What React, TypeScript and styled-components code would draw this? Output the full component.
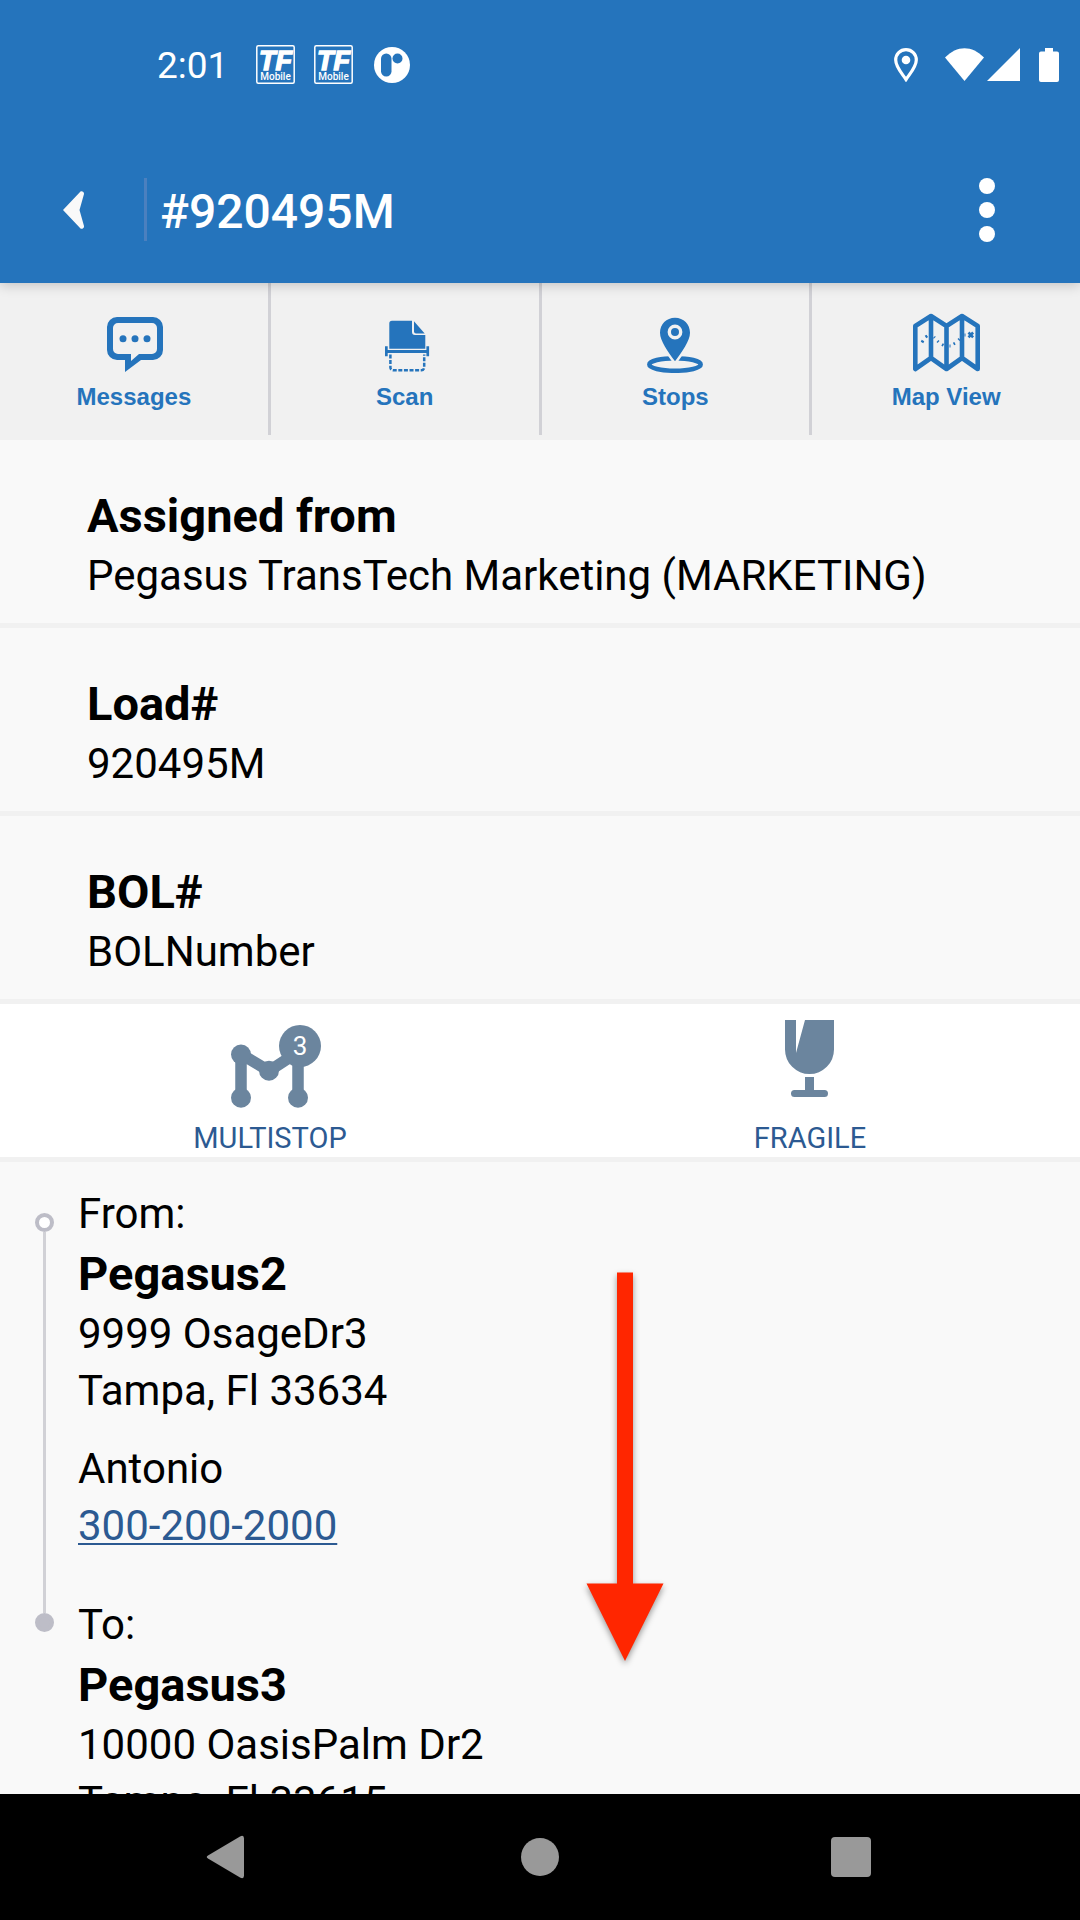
import React from "react";
import styled, { createGlobalStyle } from "styled-components";

const blue = "#2574bc";
const slate = "#6b859e";
const link = "#2c5a92";
const rule = "#f1f1f1";
const railLine = "#d1d1d6";
const railDot = "#bdbdc7";

const GlobalStyle = createGlobalStyle`
  *, *::before, *::after { box-sizing: border-box; }
  body { margin: 0; background: #000; }
  button { border: 0; padding: 0; background: none; font: inherit; color: inherit; cursor: pointer; }
  svg { display: block; flex: none; }
  h1, h2, h3, p, dl, dt, dd { margin: 0; font: inherit; }
`;

const Screen = styled.div`
  display: flex;
  flex-direction: column;
  height: 100vh;
  background: #f9f9f9;
  color: #000;
  font-family: Roboto, "Noto Sans", sans-serif;
  font-size: 42px;
  line-height: 57px;
`;

const Header = styled.header`
  position: relative;
  z-index: 1;
  flex: none;
  background: ${blue};
  color: #fff;
  box-shadow: 0 2px 12px rgba(0, 0, 0, 0.2);
`;

const StatusBar = styled.div`
  display: flex;
  align-items: center;
  justify-content: space-between;
  height: 129px;
  padding: 0 21px 0 157px;
`;

const StatusGroup = styled.div`
  display: flex;
  align-items: center;
  gap: 19px;
`;

const Clock = styled.time`
  font-size: 37px;
  line-height: 44px;
  padding: 2px 9px 0 0;
`;

const AppBar = styled.div`
  display: flex;
  align-items: center;
  height: 154px;
  padding-top: 7px;
`;

const BackButton = styled.button`
  display: flex;
  align-items: center;
  width: 144px;
  height: 96px;
  padding-left: 62px;
`;

const Title = styled.h1`
  flex: 1;
  border-left: 3px solid #4b80bf;
  padding: 4px 0 0 13px;
  font-size: 48px;
  line-height: 59px;
  font-weight: 500;
`;

const MenuButton = styled.button`
  display: flex;
  align-items: center;
  justify-content: center;
  width: 96px;
  height: 96px;
  margin-right: 45px;
`;

const Toolbar = styled.nav`
  flex: none;
  padding-bottom: 5px;
  background: ${rule};
`;

const Tools = styled.div`
  display: grid;
  grid-template-columns: repeat(4, 1fr);
  gap: 3px;
  background: ${railLine};
`;

const Tool = styled.button`
  display: flex;
  flex-direction: column;
  align-items: center;
  gap: 10px;
  padding: 30px 0 24px;
  background: ${rule};
  color: ${blue};
  font: bold 24px/28px "Liberation Sans", Arial, sans-serif;
`;

const Content = styled.main`
  flex: 1;
  min-height: 0;
  overflow-y: auto;
  scrollbar-width: none;
`;

const Field = styled.div`
  padding: 45px 87px 19px;
  border-bottom: 5px solid ${rule};
`;

const FieldName = styled.dt`
  font-size: 47px;
  line-height: 62px;
  font-weight: 700;
`;

const FieldValue = styled.dd``;

const Flags = styled.div`
  display: grid;
  grid-template-columns: repeat(2, 1fr);
  background: #fff;
  border-bottom: 5px solid ${rule};
`;

const Flag = styled.div`
  display: flex;
  flex-direction: column;
  align-items: center;
  gap: 13px;
  padding: 16px 0 2px;
  color: ${link};
  font-size: 29px;
  line-height: 34px;
`;

const Route = styled.section`
  position: relative;
  padding: 23px 35px 42px;
`;

const Stop = styled.div`
  display: flex;
  gap: 24px;
`;

const Rail = styled.div`
  display: flex;
  flex-direction: column;
  align-items: center;
  width: 19px;
  flex: none;
`;

const RailGap = styled.div`
  height: 28px;
`;

const RailLine = styled.div<{ $length?: number }>`
  width: 3px;
  background: ${railLine};
  ${(p) => (p.$length ? `height: ${p.$length}px;` : "flex: 1;")}
`;

const RailMarker = styled.div<{ $filled?: boolean }>`
  width: 19px;
  height: 19px;
  border-radius: 50%;
  border: 4px solid ${railDot};
  background: ${(p) => (p.$filled ? railDot : "#fff")};
`;

const StopBody = styled.div`
  padding-bottom: 42px;
`;

const StopName = styled.h2`
  font-size: 47px;
  line-height: 63px;
  font-weight: 700;
`;

const Contact = styled.div`
  padding-top: 21px;
`;

const Phone = styled.a`
  color: ${link};
  text-decoration: underline;
  text-decoration-thickness: 2px;
  text-underline-offset: 3px;
`;

const Arrow = styled.svg`
  position: absolute;
  top: 105px;
  left: 580px;
  pointer-events: none;
  filter: drop-shadow(0 3px 3px rgba(0, 0, 0, 0.4));
`;

const SystemNav = styled.nav`
  flex: none;
  display: grid;
  grid-template-columns: repeat(3, 1fr);
  height: 126px;
  padding: 0 70px;
  background: #000;
`;

const SystemButton = styled.button`
  display: flex;
  align-items: center;
  justify-content: center;
`;

function TFIcon() {
  return (
    <svg width="39" height="39" viewBox="0 0 39 39" role="img" aria-label="TF Mobile">
      <rect x=".8" y=".8" width="37.4" height="37.4" rx="1.5" fill="none" stroke="#fff" strokeWidth="1.5" />
      <text x="19.5" y="25" fill="#fff" textAnchor="middle" fontFamily="Liberation Sans, Arial, sans-serif" fontWeight="700" fontStyle="italic" fontSize="27" stroke="#fff" strokeWidth="1.4">TF</text>
      <text x="19.5" y="35" fill="#fff" textAnchor="middle" fontFamily="Roboto, sans-serif" fontWeight="500" fontSize="10">Mobile</text>
    </svg>
  );
}

function RoundLogo() {
  return (
    <svg width="38" height="36" viewBox="-2 0 38 36">
      <circle cx="18" cy="18" r="18" fill="#fff" />
      <rect x="7" y="6.500" width="10.500" height="23" rx="5.200" fill={blue} />
      <circle cx="23.500" cy="11.500" r="5" fill={blue} />
    </svg>
  );
}

function MessagesIcon() {
  return (
    <svg width="70" height="60" viewBox="0 0 70 60" fill={blue}>
      <path fillRule="evenodd" d="M18 4H54a10 10 0 0 1 10 10V37a10 10 0 0 1-10 10H42L26 59V47H18a10 10 0 0 1-10-10V14A10 10 0 0 1 18 4zM19 10a5 5 0 0 0-5 5V36a5 5 0 0 0 5 5H32V48L40 41H53a5 5 0 0 0 5-5V15a5 5 0 0 0-5-5z" />
      <circle cx="24" cy="25.700" r="3.500" />
      <circle cx="36" cy="25.700" r="3.500" />
      <circle cx="48" cy="25.700" r="3.500" />
    </svg>
  );
}

function ScanIcon() {
  return (
    <svg width="70" height="60" viewBox="0 0 70 60" fill={blue}>
      <path d="M22 7.700H42V19a3 3 0 0 0 3 3H55.300V35.700H19.300V10.500A2.800 2.800 0 0 1 22 7.700z" />
      <path d="M44 8.200L54.700 20.400H46a2 2 0 0 1-2-2z" />
      <path d="M15 33.300h2.700v3.700H56.400v-3.700h2.700v10h-2.700V40H17.700v3.300H15z" />
      <path d="M20.400 41.500V54.500a2.800 2.800 0 0 0 2.800 2.800H51.400a2.800 2.800 0 0 0 2.800-2.800V41.500" fill="none" stroke={blue} strokeWidth="2.500" strokeDasharray="4 1.600" />
    </svg>
  );
}

function StopsIcon() {
  return (
    <svg width="70" height="60" viewBox="0 0 70 60">
      <ellipse cx="35" cy="51.500" rx="25.700" ry="6.300" fill="none" stroke={blue} strokeWidth="4.500" />
      <path d="M35 4.700c-8.600 0-15 6.600-15 15 0 8 8 19 15 28.500 7-9.500 15-20.500 15-28.500 0-8.400-6.400-15-15-15z" fill={blue} stroke={rule} strokeWidth="5" paintOrder="stroke" />
      <circle cx="35" cy="19" r="5.700" fill={blue} stroke={rule} strokeWidth="3.400" />
    </svg>
  );
}

function MapIcon() {
  return (
    <svg width="70" height="60" viewBox="0 0 70 60" fill="none" stroke={blue} strokeWidth="4.600" strokeLinejoin="round">
      <path d="M4.300 13L20 3l15.500 10L51 3l15.700 10v43L51 45 35.500 56 20 45 4.300 56zM20 3v42M35.500 13v43M51 3v42" />
      <path d="M11 29.500l1-2M14.500 24l1.800-1.200M23 24l.8.800M26.500 28l1 1M31 31.500l1.500.8M38.500 33h1M42.500 31l1.500-.8M47.500 27l1-1M53.500 22h1" strokeWidth="2.800" />
      <path d="M57.500 19.500l4.600 4.800M62.100 19.500l-4.600 4.800" strokeWidth="2.600" />
    </svg>
  );
}

function MultistopIcon({ count }: { count: number }) {
  return (
    <svg width="102" height="88" viewBox="0 0 102 88" fill={slate}>
      <path d="M22 78V34L50 51 79 32M79 26V78" fill="none" stroke={slate} strokeWidth="11.500" strokeLinejoin="round" />
      <circle cx="22" cy="34.500" r="10" />
      <circle cx="50" cy="50.700" r="10" />
      <circle cx="22" cy="77.700" r="10" />
      <circle cx="79" cy="77.700" r="10" />
      <circle cx="81" cy="26" r="21" />
      <text x="81" y="35" fill="#fff" textAnchor="middle" fontFamily="Roboto, sans-serif" fontSize="26">{count}</text>
    </svg>
  );
}

function FragileIcon() {
  return (
    <svg width="102" height="88" viewBox="0 0 102 88" fill={slate}>
      <path d="M26 0H37V33L46 0H75V29.500a24.500 24.500 0 0 1-49 0z" />
      <path d="M46 57h9V70H65.500a3.500 3.500 0 0 1 0 7h-30a3.500 3.500 0 0 1 0-7H46z" />
    </svg>
  );
}

const tools = [
  { label: "Messages", Icon: MessagesIcon },
  { label: "Scan", Icon: ScanIcon },
  { label: "Stops", Icon: StopsIcon },
  { label: "Map View", Icon: MapIcon },
];

const fields = [
  { name: "Assigned from", value: "Pegasus TransTech Marketing (MARKETING)" },
  { name: "Load#", value: "920495M" },
  { name: "BOL#", value: "BOLNumber" },
];

export default function App() {
  return (
    <Screen>
      <GlobalStyle />
      <Header>
        <StatusBar>
          <StatusGroup>
            <Clock>2:01</Clock>
            <TFIcon />
            <TFIcon />
            <RoundLogo />
          </StatusGroup>
          <StatusGroup>
            <svg width="32" height="34" viewBox="0 0 32 34">
              <path d="M12 1.700C6.200 1.700 1.700 6.200 1.700 12c0 7 6.300 13.500 10.300 19.500C16 25.500 22.300 19 22.300 12 22.300 6.200 17.800 1.700 12 1.700z" fill="none" stroke="#fff" strokeWidth="3.200" />
              <circle cx="12" cy="12" r="4.300" fill="#fff" />
            </svg>
            <svg width="75" height="34" viewBox="0 0 75 34" fill="#fff">
              <path d="M0 9.500C12-3 27-3 39 9.500L19.500 33z" />
              <path d="M75 0V33H42z" />
            </svg>
            <svg width="20" height="34" viewBox="0 0 20 34" fill="#fff">
              <path d="M6 0h8v3.500h4a2 2 0 0 1 2 2V32a2 2 0 0 1-2 2H2a2 2 0 0 1-2-2V5.500a2 2 0 0 1 2-2h4z" />
            </svg>
          </StatusGroup>
        </StatusBar>
        <AppBar>
          <BackButton aria-label="Back">
            <svg width="24" height="40" viewBox="0 0 24 40">
              <path d="M18.500 1.500c1-1 4 .3 3.500 2.500L17.500 20 22 36c.5 2.200-2.500 3.500-3.500 2.500L1 20z" fill="#f9f9f9" />
            </svg>
          </BackButton>
          <Title>#920495M</Title>
          <MenuButton aria-label="More options">
            <svg width="16" height="64" viewBox="0 0 16 64" fill="#fff">
              <circle cx="8" cy="8" r="8" />
              <circle cx="8" cy="32" r="8" />
              <circle cx="8" cy="56" r="8" />
            </svg>
          </MenuButton>
        </AppBar>
      </Header>

      <Toolbar>
        <Tools>
          {tools.map(({ label, Icon }) => (
            <Tool key={label}>
              <Icon />
              {label}
            </Tool>
          ))}
        </Tools>
      </Toolbar>

      <Content>
        <dl>
          {fields.map((f) => (
            <Field key={f.name}>
              <FieldName>{f.name}</FieldName>
              <FieldValue>{f.value}</FieldValue>
            </Field>
          ))}
        </dl>

        <Flags>
          <Flag>
            <MultistopIcon count={3} />
            MULTISTOP
          </Flag>
          <Flag>
            <FragileIcon />
            FRAGILE
          </Flag>
        </Flags>

        <Route>
          <Stop>
            <Rail>
              <RailGap />
              <RailMarker />
              <RailLine />
            </Rail>
            <StopBody>
              <p>From:</p>
              <StopName>Pegasus2</StopName>
              <p>9999 OsageDr3</p>
              <p>Tampa, Fl 33634</p>
              <Contact>
                <p>Antonio</p>
                <p>
                  <Phone href="tel:300-200-2000">300-200-2000</Phone>
                </p>
              </Contact>
            </StopBody>
          </Stop>
          <Stop>
            <Rail>
              <RailLine $length={17} />
              <RailMarker $filled />
            </Rail>
            <StopBody>
              <p>To:</p>
              <StopName>Pegasus3</StopName>
              <p>10000 OasisPalm Dr2</p>
              <p>Tampa, Fl 33615</p>
            </StopBody>
          </Stop>
          <Arrow width="90" height="400" viewBox="0 0 90 400" aria-hidden="true">
            <path d="M37 5.500H53V316.500H83.500L45 394 6.500 316.500H37z" fill="#ff2600" />
          </Arrow>
        </Route>
      </Content>

      <SystemNav>
        <SystemButton aria-label="System back">
          <svg width="42" height="44" viewBox="0 0 42 44">
            <path d="M2 20.500L34 1.500q4-2 4 2v37q0 4-4 2L2 23.500q-2.500-1.500 0-3z" fill="#999" />
          </svg>
        </SystemButton>
        <SystemButton aria-label="Home">
          <svg width="38" height="38" viewBox="0 0 38 38">
            <circle cx="19" cy="19" r="19" fill="#999" />
          </svg>
        </SystemButton>
        <SystemButton aria-label="Recent apps">
          <svg width="44" height="40" viewBox="0 0 44 40">
            <rect width="40" height="40" rx="4" fill="#999" />
          </svg>
        </SystemButton>
      </SystemNav>
    </Screen>
  );
}
